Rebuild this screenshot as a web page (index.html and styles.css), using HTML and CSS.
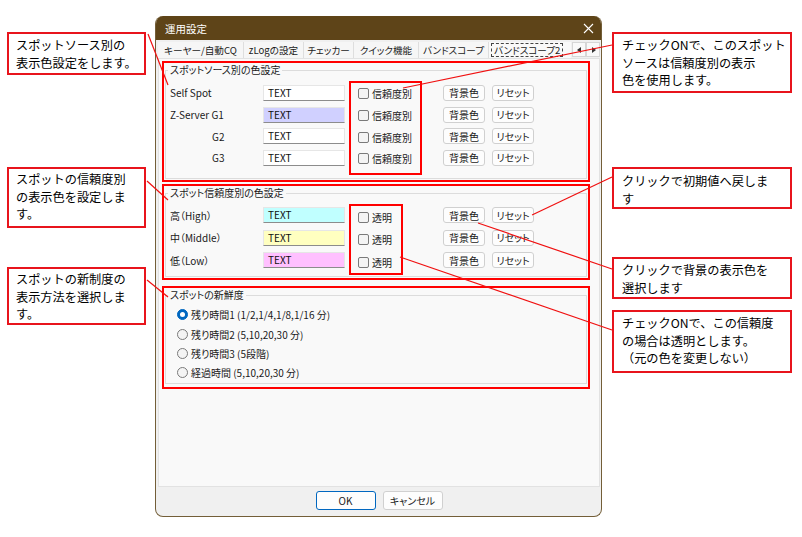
FILE: index.html
```html
<!DOCTYPE html>
<html lang="ja">
<head>
<meta charset="utf-8">
<title>運用設定</title>
<link rel="stylesheet" href="styles.css">
</head>
<body>
<div class="stage">
  <div class="col-left">
    <div class="note n1">スポットソース別の<br>表示色設定をします。</div>
    <div class="note n3">スポットの信頼度別<br>の表示色を設定しま<br>す。</div>
    <div class="note n4">スポットの新制度の<br>表示方法を選択しま<br>す。</div>
  </div>

  <div class="dialog">
    <div class="titlebar">
      <span class="title">運用設定</span>
      <svg class="close" width="11" height="11" viewBox="0 0 11 11"><path d="M1 1L10 10M10 1L1 10" stroke="#fff" stroke-width="1.1" fill="none"/></svg>
    </div>
    <div class="dbody">
      <div class="tabs">
        <span class="tab t1">キーヤー/自動CQ</span>
        <span class="tab t2">zLogの設定</span>
        <span class="tab t3">チェッカー</span>
        <span class="tab t4">クイック機能</span>
        <span class="tab t5">バンドスコープ</span>
        <span class="tab t6 active"><span class="focus">バンドスコープ2</span></span>
        <span class="arrows">
          <span class="arr"><svg width="5" height="6" viewBox="0 0 5 6"><path d="M4 0L0 3L4 6Z" fill="#333"/></svg></span>
          <span class="arr"><svg width="5" height="6" viewBox="0 0 5 6"><path d="M1 0L5 3L1 6Z" fill="#333"/></svg></span>
        </span>
      </div>
      <div class="panel">
        <div class="redbox g1">
          <div class="gbox">
            <div class="gtitle">スポットソース別の色設定</div>
            <div class="grow">
              <div class="colA">
                <div class="row r1"><span class="lbl">Self Spot</span><span class="tb">TEXT</span></div>
                <div class="row r1"><span class="lbl">Z-Server G1</span><span class="tb lav">TEXT</span></div>
                <div class="row r1"><span class="lbl ind">G2</span><span class="tb">TEXT</span></div>
                <div class="row r1"><span class="lbl ind">G3</span><span class="tb">TEXT</span></div>
              </div>
              <div class="colB b1">
                <div class="row r1"><span class="cb"></span><span>信頼度別</span></div>
                <div class="row r1"><span class="cb"></span><span>信頼度別</span></div>
                <div class="row r1"><span class="cb"></span><span>信頼度別</span></div>
                <div class="row r1"><span class="cb"></span><span>信頼度別</span></div>
              </div>
              <div class="colC c1">
                <div class="row r1"><span class="btn">背景色</span><span class="btn">リセット</span></div>
                <div class="row r1"><span class="btn">背景色</span><span class="btn">リセット</span></div>
                <div class="row r1"><span class="btn">背景色</span><span class="btn">リセット</span></div>
                <div class="row r1"><span class="btn">背景色</span><span class="btn">リセット</span></div>
              </div>
            </div>
          </div>
        </div>

        <div class="redbox g2">
          <div class="gbox">
            <div class="gtitle">スポット信頼度別の色設定</div>
            <div class="grow">
              <div class="colA">
                <div class="row r2"><span class="lbl">高（High）</span><span class="tb cyan">TEXT</span></div>
                <div class="row r2"><span class="lbl">中（Middle）</span><span class="tb yel">TEXT</span></div>
                <div class="row r2"><span class="lbl">低（Low）</span><span class="tb pink">TEXT</span></div>
              </div>
              <div class="colB b2">
                <div class="row r2"><span class="cb"></span><span>透明</span></div>
                <div class="row r2"><span class="cb"></span><span>透明</span></div>
                <div class="row r2"><span class="cb"></span><span>透明</span></div>
              </div>
              <div class="colC c2">
                <div class="row r2"><span class="btn">背景色</span><span class="btn">リセット</span></div>
                <div class="row r2"><span class="btn">背景色</span><span class="btn">リセット</span></div>
                <div class="row r2"><span class="btn">背景色</span><span class="btn">リセット</span></div>
              </div>
            </div>
          </div>
        </div>

        <div class="redbox g3">
          <div class="gbox">
            <div class="gtitle">スポットの新鮮度</div>
            <div class="radios">
              <div class="row r3"><span class="rb on"></span><span>残り時間1 (1/2,1/4,1/8,1/16 分)</span></div>
              <div class="row r3"><span class="rb"></span><span>残り時間2 (5,10,20,30 分)</span></div>
              <div class="row r3"><span class="rb"></span><span>残り時間3 (5段階)</span></div>
              <div class="row r3"><span class="rb"></span><span>経過時間 (5,10,20,30 分)</span></div>
            </div>
          </div>
        </div>
      </div>
      <div class="footer">
        <span class="btn fbtn ok">OK</span>
        <span class="btn fbtn">キャンセル</span>
      </div>
    </div>
  </div>

  <div class="col-right">
    <div class="note n2">チェックONで、このスポット<br>ソースは信頼度別の表示<br>色を使用します。</div>
    <div class="note n5">クリックで初期値へ戻しま<br>す</div>
    <div class="note n6">クリックで背景の表示色を<br>選択します</div>
    <div class="note n7">チェックONで、この信頼度<br>の場合は透明とします。<br>（元の色を変更しない）</div>
  </div>

  <svg class="lines" width="802" height="537" viewBox="0 0 802 537">
    <g stroke="#f01010" stroke-width="1.2" fill="none">
      <line x1="148" y1="34" x2="168" y2="85"/>
      <line x1="403" y1="88" x2="612" y2="45"/>
      <line x1="147" y1="181" x2="168" y2="200"/>
      <line x1="147" y1="280" x2="168" y2="297"/>
      <line x1="532" y1="215" x2="612" y2="177"/>
      <line x1="478" y1="223" x2="612" y2="269"/>
      <line x1="400" y1="257" x2="612" y2="330"/>
    </g>
  </svg>
</div>
</body>
</html>
```

FILE: styles.css
```css
* { box-sizing: border-box; }
html, body { margin: 0; padding: 0; background: #fff; }
body { font-family: "Noto Sans CJK JP", "Noto Sans", sans-serif; color: #1a1a1a; }

.stage {
  position: relative;
  width: 802px;
  height: 537px;
  display: flex;
  align-items: flex-start;
  overflow: hidden;
}

/* callouts */
.col-left { width: 155px; padding-left: 7px; display: flex; flex-direction: column; }
.col-right { width: 200px; padding-left: 10px; display: flex; flex-direction: column; }
.note {
  border: 2px solid #e8141c;
  background: #fff;
  font-size: 12.2px;
  line-height: 17.5px;
  color: #000;
  padding: 3px 0 0 7px;
  white-space: nowrap;
}
.col-left .note { width: 139px; }
.col-right .note { width: 180px; padding-left: 8px; }
.n1 { margin-top: 32px; height: 43px; padding-top: 3px; }
.n3 { margin-top: 92px; height: 61px; padding-top: 2px; }
.n4 { margin-top: 39px; height: 58px; padding-top: 2px; }
.n2 { margin-top: 32px; height: 61px; padding-top: 3px; }
.n5 { margin-top: 74px; height: 42px; padding-top: 4px; }
.n6 { margin-top: 48px; height: 42px; padding-top: 3px; }
.n7 { margin-top: 11px; height: 63px; padding-top: 3px; }

.lines { position: absolute; left: 0; top: 0; pointer-events: none; }

/* dialog */
.dialog {
  margin-top: 16px;
  width: 447px;
  height: 501px;
  border: 1px solid #735e38;
  border-top: none;
  border-radius: 8px;
  background: #f0f0f0;
  display: flex;
  flex-direction: column;
  overflow: hidden;
  font-feature-settings: "palt";
}
.titlebar {
  height: 24px;
  background: #5e4418;
  display: flex;
  align-items: center;
  justify-content: space-between;
  padding: 0 7px 0 9px;
  color: #fff;
  font-size: 10.5px;
  flex: none;
}
.close { display: block; }

.dbody { flex: 1; display: flex; flex-direction: column; padding: 0 1px 0 2px; }

.tabs {
  height: 18px;
  display: flex;
  align-items: flex-end;
  font-size: 9.6px;
  flex: none;
}
.tab {
  height: 16px;
  display: flex;
  align-items: center;
  justify-content: center;
  background: #f6f6f6;
  border-right: 1px solid #dedede;
  white-space: nowrap;
  color: #1a1a1a;
}
.t1 { width: 86px; }
.t2 { width: 60px; }
.t3 { width: 50px; }
.t4 { width: 65px; }
.t5 { width: 70px; }
.t6 { width: 82px; justify-content: flex-start; padding-left: 2px; background: #f9f9f9; border-right: none; }
.focus { border: 1px dashed #444; padding: 0 2px; line-height: 12px; height: 14px; }
.arrows { display: flex; margin-left: auto; height: 16px; }
.arr {
  width: 14px;
  height: 15px;
  border: 1px solid #d6d6d6;
  background: #f9f9f9;
  display: flex;
  align-items: center;
  justify-content: center;
}

.panel {
  height: 429px;
  flex: none;
  background: #f9f9f9;
  border: 1px solid #e2e2e2;
  padding: 2px 0 0 3px;
  font-size: 10px;
}

.redbox {
  width: 428px;
  border: 2px solid #ff0000;
  padding: 7px 1px 1px 1px;
}
.g2 { margin-top: 2px; }
.g3 { margin-top: 6px; padding-bottom: 3px; }

.gbox {
  border: 1px solid #dcdcdc;
  padding: 0 0 3px 4px;
}
.g2 .gbox { padding-bottom: 1px; }
.g3 .gbox { padding-bottom: 1px; }
.gtitle {
  width: max-content;
  margin-top: -8px;
  margin-left: -2px;
  padding: 0 2px;
  height: 14px;
  line-height: 14px;
  background: #f9f9f9;
  color: #1a1a1a;
}

.grow { display: flex; align-items: flex-start; margin-top: 5px; }
.g2 .grow { margin-top: 4px; }

.row { display: flex; align-items: center; white-space: nowrap; }
.r1 { height: 21.7px; }
.r2 { height: 22.5px; }
.r3 { height: 19.2px; }

.colA { width: 175px; }
.lbl { width: 93px; }
.lbl.ind { padding-left: 42px; }
.tb {
  width: 82px;
  height: 16px;
  background: #fff;
  border: 1px solid #e6e6e6;
  border-bottom: 1px solid #8c8c8c;
  padding-left: 4px;
  line-height: 14px;
  color: #111;
}
.lav { background: #d0d0ff; }
.cyan { background: #c0ffff; }
.yel { background: #ffffc0; }
.pink { background: #ffc0ff; }

.colB {
  margin-left: 4px;
  border: 2px solid #ff0000;
  padding: 0 0 3px 7px;
}
.b1 { width: 73px; margin-top: -1px; }
.b2 { width: 54px; padding-bottom: 0; }
.cb {
  width: 11px;
  height: 11px;
  border: 1px solid #7a7a7a;
  border-radius: 2px;
  background: #f4f4f4;
  margin-right: 3px;
  flex: none;
}

.colC .row { gap: 7px; }
.c1 { margin-left: 21px; }
.c2 { margin-left: 40px; }
.btn {
  width: 42px;
  height: 16px;
  display: flex;
  align-items: center;
  justify-content: center;
  background: #fdfdfd;
  border: 1px solid #d0d0d0;
  border-radius: 3px;
  font-size: 10px;
  color: #1a1a1a;
}

.radios { margin-top: 3px; padding-left: 7px; }
.rb {
  width: 11px;
  height: 11px;
  border-radius: 50%;
  border: 1px solid #7a7a7a;
  background: #f4f4f4;
  margin-right: 3px;
  flex: none;
  display: flex;
  align-items: center;
  justify-content: center;
}
.rb.on { background: #0067c0; border-color: #0067c0; }
.rb.on::after { content: ""; width: 5px; height: 5px; border-radius: 50%; background: #fff; }

.footer {
  flex: 1;
  display: flex;
  justify-content: center;
  align-items: center;
  gap: 7px;
  padding-bottom: 2px;
}
.fbtn { width: 60px; height: 19px; font-size: 10px; }
.ok { border-color: #0067c0; }
```
